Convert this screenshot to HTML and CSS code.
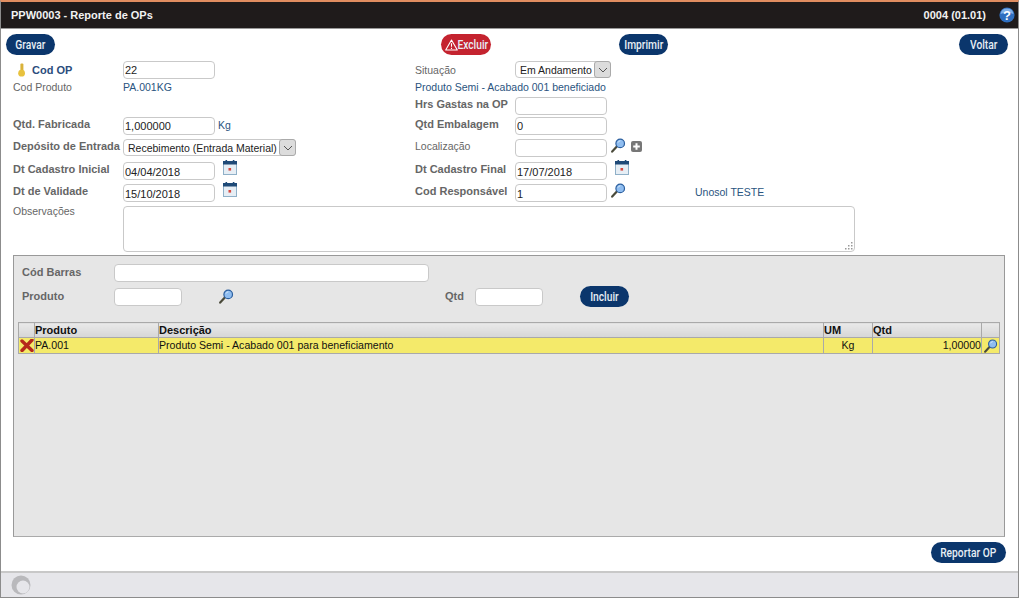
FILE: index.html
```html
<!DOCTYPE html>
<html>
<head>
<title>PPW0003 - Reporte de OPs</title>
<link rel="stylesheet" href="styles.css">
</head>
<body>

  <svg class="sprites" width="0" height="0">
    <symbol id="lupa" viewBox="0 0 15 15">
      <path d="M5.6 8.8 L1.2 13.6" stroke="#4a4a3a" stroke-width="2.2" stroke-linecap="round"/>
      <circle cx="9.2" cy="5.4" r="4.3" fill="#8fbdf0" stroke="#2c5f9e" stroke-width="1.2"/>
      <path d="M7 4.6 A2.6 2.6 0 0 1 9.4 2.8" fill="none" stroke="#d5e8fb" stroke-width="1"/>
    </symbol>
    <symbol id="calendario" viewBox="0 0 14 15">
      <rect x="0.5" y="1.5" width="13" height="13" fill="#e6eef5" stroke="#8fb0c8"/>
      <rect x="0" y="1" width="14" height="3.5" fill="#1f4a78"/>
      <rect x="2.5" y="0" width="1.6" height="2.5" fill="#1f4a78"/>
      <rect x="9.8" y="0" width="1.6" height="2.5" fill="#1f4a78"/>
      <rect x="5.5" y="8" width="2.6" height="2.6" fill="#d8483f"/>
    </symbol>
  </svg>

  <div class="janela">

    <div class="titulo">
      <span>PPW0003 - Reporte de OPs</span>
      <span class="titulo-dir">
        0004 (01.01)
        <svg class="ajuda" viewBox="0 0 16 16" width="16" height="16">
          <circle cx="8" cy="8" r="7.6" fill="#2f6fc0"/>
          <path d="M1.5 7 A6.6 6.6 0 0 1 14.5 7 Q8 4.5 1.5 7Z" fill="#7fb0e8"/>
          <text x="8" y="12.5" text-anchor="middle" class="ajuda-txt">?</text>
        </svg>
      </span>
    </div>

    <div class="barra">
      <button class="btn"><span>Gravar</span></button>
      <button class="btn btn-excluir">
        <svg viewBox="0 0 13 12" width="13" height="12"><path d="M6.5 1 L12.3 11 H0.7 Z M6.5 4.2 V7.8 M6.5 8.8 V10" fill="none" stroke="#fff" stroke-width="1.1" stroke-linejoin="round"/></svg><span>Excluir</span>
      </button>
      <button class="btn btn-imprimir"><span>Imprimir</span></button>
      <button class="btn btn-voltar"><span>Voltar</span></button>
    </div>

    <div class="form">
      <label class="rot-chave">
        <svg viewBox="0 0 10 14" width="10" height="14"><rect x="3.4" y="0.5" width="3" height="8" rx="1" fill="#d9b23a"/><circle cx="4.6" cy="10.2" r="3.4" fill="#e8c23e"/></svg>
        Cod OP
      </label>
      <div class="campo"><input class="inp" value="22"></div>
      <label class="rot rot-alto">Situação</label>
      <div class="campo">
        <div class="sel sel-sit"><span>Em Andamento</span><i class="sel-seta"><svg viewBox="0 0 10 6" width="10" height="6"><path d="M1 1 L5 5 L9 1" fill="none" stroke="#555"/></svg></i></div>
      </div>

      <label class="rot">Cod Produto</label>
      <div class="campo valor">PA.001KG</div>
      <div class="valor valor-desc">Produto Semi - Acabado 001 beneficiado</div>

      <div></div>
      <div></div>
      <label class="rot forte">Hrs Gastas na OP</label>
      <div class="campo"><input class="inp"></div>

      <label class="rot forte">Qtd. Fabricada</label>
      <div class="campo"><input class="inp" value="1,000000"><span class="valor">Kg</span></div>
      <label class="rot forte">Qtd Embalagem</label>
      <div class="campo"><input class="inp" value="0"></div>

      <label class="rot forte">Depósito de Entrada</label>
      <div class="campo">
        <div class="sel sel-dep"><span>Recebimento (Entrada Material)</span><i class="sel-seta"><svg viewBox="0 0 10 6" width="10" height="6"><path d="M1 1 L5 5 L9 1" fill="none" stroke="#555"/></svg></i></div>
      </div>
      <label class="rot rot-local">Localização</label>
      <div class="campo">
        <input class="inp">
        <svg class="ico ico-lupa"><use href="#lupa"/></svg>
        <svg class="mais" viewBox="0 0 11 11" width="11" height="11"><rect width="11" height="11" rx="2" fill="#777"/><path d="M5.5 2.2 V8.8 M2.2 5.5 H8.8" stroke="#fff" stroke-width="2"/></svg>
      </div>

      <label class="rot forte">Dt Cadastro Inicial</label>
      <div class="campo"><input class="inp inp-baixo" value="04/04/2018"><svg class="ico ico-cal"><use href="#calendario"/></svg></div>
      <label class="rot forte">Dt Cadastro Final</label>
      <div class="campo"><input class="inp inp-baixo" value="17/07/2018"><svg class="ico ico-cal"><use href="#calendario"/></svg></div>

      <label class="rot forte">Dt de Validade</label>
      <div class="campo"><input class="inp inp-baixo" value="15/10/2018"><svg class="ico ico-cal"><use href="#calendario"/></svg></div>
      <label class="rot forte">Cod Responsável</label>
      <div class="campo">
        <input class="inp inp-baixo" value="1">
        <svg class="ico ico-lupa"><use href="#lupa"/></svg>
        <span class="valor responsavel">Unosol TESTE</span>
      </div>

      <label class="rot rot-obs">Observações</label>
      <div class="obs">
        <svg class="alca" viewBox="0 0 9 9" width="9" height="9"><path d="M7 1h1.5v1.5H7zM4 4h1.5v1.5H4zM7 4h1.5v1.5H7zM1 7h1.5v1.5H1zM4 7h1.5v1.5H4zM7 7h1.5v1.5H7z" fill="#999"/></svg>
      </div>
    </div>

    <div class="painel">
      <div class="linha-barras">
        <label class="rot forte rot-painel">Cód Barras</label>
        <input class="inp inp-barras">
      </div>
      <div class="linha-produto">
        <label class="rot forte rot-painel">Produto</label>
        <input class="inp inp-curto">
        <svg class="ico lupa-produto"><use href="#lupa"/></svg>
        <label class="rot forte rot-qtd">Qtd</label>
        <input class="inp inp-curto">
        <button class="btn btn-incluir"><span>Incluir</span></button>
      </div>

      <table class="grade">
        <colgroup>
          <col class="c-acao"><col class="c-prod"><col><col class="c-um"><col class="c-qtd"><col class="c-fim">
        </colgroup>
        <thead>
          <tr><th></th><th>Produto</th><th>Descrição</th><th>UM</th><th>Qtd</th><th></th></tr>
        </thead>
        <tbody>
          <tr>
            <td class="acao"><svg viewBox="0 0 14 13" width="14" height="13"><path d="M2 2 L12 11.5 M12 1 L2 11.5" stroke="#b5281c" stroke-width="3.4" stroke-linecap="round"/></svg></td>
            <td>PA.001</td>
            <td>Produto Semi - Acabado 001 para beneficiamento</td>
            <td class="centro">Kg</td>
            <td class="direita">1,00000</td>
            <td class="acao"><svg width="14" height="14"><use href="#lupa"/></svg></td>
          </tr>
        </tbody>
      </table>
    </div>

    <div class="rodape-acoes">
      <button class="btn btn-reportar"><span>Reportar OP</span></button>
    </div>

    <div class="status">
      <svg viewBox="0 0 20 20" width="20" height="20">
        <circle cx="10" cy="10" r="9.5" fill="#b9b9bc"/>
        <circle cx="12" cy="12" r="6.5" fill="#e6e6ea"/>
      </svg>
    </div>
  </div>

</body>
</html>
```

FILE: styles.css
```css
* {
  box-sizing: border-box;
}

body {
  margin: 0;
  font-family: "Liberation Sans", Arial, sans-serif;
  font-size: 10.5px;
  color: #666;
  background: #fff;
}

.sprites {
  position: absolute;
}

.janela {
  width: 1019px;
  height: 598px;
  display: flex;
  flex-direction: column;
  border-left: 1px solid #8c8c8c;
  border-right: 1px solid #8c8c8c;
  border-bottom: 1px solid #8c8c8c;
  border-top: 2px solid #e08d60;
}

.titulo {
  height: 27px;
  flex: none;
  display: flex;
  align-items: center;
  justify-content: space-between;
  padding: 0 3px 0 10px;
  background: #1f1b1b;
  border-bottom: 1px solid #999;
  color: #f2f2f2;
  font-weight: bold;
  font-size: 11px;
}

.titulo-dir {
  display: flex;
  align-items: center;
  gap: 13px;
}

.ajuda-txt {
  font: bold 13px "Liberation Sans", sans-serif;
  fill: #fff;
}

.barra {
  display: flex;
  flex: none;
  padding: 5px 0 0 5px;
  height: 32px;
}

/* no condensed family installed, so the label is squeezed */
.btn {
  width: 49px;
  height: 21px;
  padding: 0;
  border: 0;
  border-radius: 11px;
  background: #0b366c;
  color: #e8eef5;
  font-family: Roboto, "Liberation Sans", sans-serif;
  font-size: 12.5px;
  font-weight: 500;
  flex: none;
  display: flex;
  align-items: center;
  justify-content: center;
}

.btn span {
  display: block;
  white-space: nowrap;
  transform: scaleX(0.82);
}

.btn-excluir {
  width: 50px;
  margin-left: 386px;
  background: #c4232f;
}

.btn-excluir svg {
  flex: none;
}

.btn-excluir span {
  margin: 0 -4px;
}

.btn-imprimir {
  margin-left: 128px;
}

.btn-voltar {
  margin-left: 291px;
}

.btn-reportar {
  width: 75px;
}

.form {
  flex: none;
  display: grid;
  grid-template-columns: 110px 292px 100px 1fr;
  grid-template-rows: 18px 18px 20px 22px 23px 22px 22px 46px;
  padding-left: 12px;
}

.rot,
.rot-chave {
  display: flex;
  align-items: center;
  height: 16px;
  white-space: nowrap;
}

.rot-alto {
  height: 18px;
}

.rot-local {
  height: 14px;
}

.forte {
  height: 14px;
  font-size: 11px;
  font-weight: bold;
  color: #666;
}

.rot-chave {
  height: 18px;
  font-size: 11px;
  color: #2b4d7c;
  font-weight: bold;
  padding-left: 4px;
  gap: 5px;
}

.campo {
  display: flex;
  align-items: flex-start;
  min-width: 0;
}

.valor {
  color: #2a5480;
  line-height: 16px;
}

.valor-desc {
  white-space: nowrap;
  grid-column: 3 / 5;
}

.inp {
  width: 92px;
  height: 18px;
  flex: none;
  padding: 0 1px 1px;
  border: 1px solid #c9c9c9;
  border-radius: 4px;
  background: #fff;
  color: #222;
  font-family: "Liberation Sans", sans-serif;
  font-size: 11px;
  outline: 0;
}

.inp-baixo {
  padding: 2px 1px 0;
}

.campo > .valor {
  margin-left: 3px;
}

.campo .responsavel {
  margin-left: 69px;
}

.sel {
  height: 17px;
  display: flex;
  align-items: center;
  justify-content: space-between;
  border: 1px solid #c9c9c9;
  border-radius: 4px;
  background: #fff;
  color: #222;
  padding-left: 4px;
  white-space: nowrap;
}

.sel-sit {
  width: 96px;
}

.sel-dep {
  width: 173px;
}

.sel-seta {
  width: 17px;
  height: 17px;
  flex: none;
  display: flex;
  align-items: center;
  justify-content: center;
  margin-right: -1px;
  background: #dcdcdc;
  border: 1px solid #aaa;
  border-radius: 3px;
}

.ico {
  flex: none;
}

.ico-lupa {
  width: 15px;
  height: 15px;
  margin-left: 4px;
  margin-top: -1px;
}

.ico-cal {
  width: 14px;
  height: 15px;
  margin-left: 8px;
  margin-top: -2px;
}

.mais {
  margin-left: 5px;
  margin-top: 2px;
}

.rot-obs {
  height: 10px;
}

.obs {
  grid-column: 2 / 5;
  position: relative;
  width: 732px;
  height: 46px;
  border: 1px solid #c9c9c9;
  border-radius: 4px;
}

.alca {
  position: absolute;
  right: 1px;
  bottom: 1px;
}

.painel {
  flex: none;
  width: 992px;
  height: 282px;
  margin: 3px 0 0 12px;
  padding: 8px 4px 0 8px;
  background: #e6e6e6;
  border: 1px solid #999;
  border-bottom-color: #aaa;
}

.rot-painel {
  width: 92px;
  margin-bottom: 2px;
}

.linha-barras,
.linha-produto {
  display: flex;
  align-items: center;
}

.linha-produto {
  margin-top: 4px;
  height: 21px;
}

.inp-barras {
  width: 315px;
}

.inp-curto {
  width: 68px;
}

.lupa-produto {
  width: 15px;
  height: 15px;
  margin-left: 37px;
}

.rot-qtd {
  margin-left: 211px;
  margin-bottom: 2px;
  width: 30px;
}

.btn-incluir {
  margin-left: 37px;
}

.grade {
  width: 982px;
  margin: 15px 0 0 -4px;
  border-collapse: collapse;
  table-layout: fixed;
  color: #111;
  font-size: 10.6px;
}

.c-acao {
  width: 16px;
}

.c-prod {
  width: 124px;
}

.c-um {
  width: 49px;
}

.c-qtd {
  width: 109px;
}

.c-fim {
  width: 18px;
}

.grade th {
  height: 15px;
  padding: 0;
  text-align: left;
  border: 1px solid #a9a9a9;
  background: linear-gradient(#e9e9e9, #d6d6d6);
  line-height: 12px;
  font-size: 11px;
}

.grade td {
  height: 16px;
  padding: 0;
  background: #f4ea6a;
  border: 1px solid #a9a9a9;
  white-space: nowrap;
  line-height: 13px;
}

.grade .acao {
  padding: 0;
  text-align: center;
}

.grade svg {
  display: block;
  margin: 0 auto;
}

.centro {
  text-align: center;
}

.direita {
  text-align: right;
}

.rodape-acoes {
  flex: none;
  display: flex;
  justify-content: flex-end;
  padding: 5px 12px 0 0;
  height: 34px;
}

.status {
  flex: 1;
  display: flex;
  align-items: center;
  padding-left: 10px;
  background: #e6e6ea;
  border-top: 2px solid #c8c8c8;
}
```
